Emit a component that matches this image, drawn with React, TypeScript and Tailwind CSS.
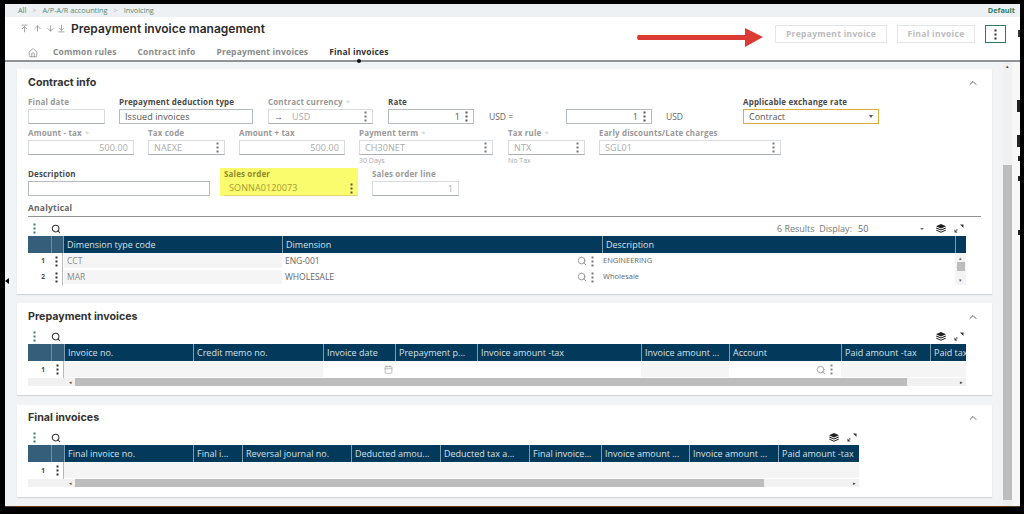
import { ArrowDown, ArrowDownToLine, ArrowUp, ArrowUpToLine, Calendar, ChevronUp, Home, Search } from 'lucide-react';
import type { ReactNode } from 'react';

const MoreDots = ({ className = 'text-[#555]' }: { className?: string }) => (
  <svg width="3" height="11" viewBox="0 0 3 11" className={`shrink-0 ${className}`} fill="currentColor">
    <rect x="0.5" y="0.5" width="2" height="2" />
    <rect x="0.5" y="4.5" width="2" height="2" />
    <rect x="0.5" y="8.5" width="2" height="2" />
  </svg>
);

const Expand = () => (
  <svg width="10" height="9" viewBox="0 0 10 9" fill="#333">
    <path d="M9.5 0.5 L9.5 4 L6 0.5 Z" />
    <path d="M0.5 8.5 L0.5 5.5 L3.5 8.5 Z" />
    <rect x="2" y="5.5" width="1.5" height="1" />
  </svg>
);

const Stack = () => (
  <svg width="10" height="9" viewBox="0 0 10 9" fill="#222">
    <path d="M5 0 L10 2.2 L5 4.4 L0 2.2 Z" />
    <path d="M0.6 3.6 L5 5.5 L9.4 3.6 L10 4.4 L5 6.6 L0 4.4 Z" />
    <path d="M0.6 5.8 L5 7.7 L9.4 5.8 L10 6.6 L5 8.8 L0 6.6 Z" />
  </svg>
);

interface FieldProps {
  label: string;
  value?: string;
  box: string;
  required?: boolean;
  dark?: boolean;
  right?: boolean;
  menu?: boolean;
  sub?: string;
  prefix?: boolean;
}

const Field = ({ label, value, box, required, dark, right, menu, sub, prefix }: FieldProps) => (
  <div className={`shrink-0 ${box}`}>
    <div className={`h-[10px] text-[8px] leading-[10px] font-bold tracking-[0.15px] whitespace-nowrap ${dark ? 'text-[#4a4a4a]' : 'text-[#999]'}`}>
      {label}
      {required && <span className="ml-[3px] font-normal text-[#ccc]">*</span>}
    </div>
    <div className={`mt-[2px] h-[15px] flex items-center px-[5px] text-[9px] tracking-[0.1px] bg-white border ${dark ? 'border-[#b4babd] text-[#555]' : 'border-[#d9dcde] border-b-[#aab0b3] text-[#aaa]'} ${right ? 'justify-end' : ''}`}>
      {prefix && <span className="mr-[9px] text-[#666]">→</span>}
      <span className={right ? '' : 'flex-1'}>{value}</span>
      {menu && <MoreDots className={`ml-[5px] ${dark ? 'text-[#555]' : 'text-[#777]'}`} />}
    </div>
    {sub && <div className="mt-[1px] h-[10px] text-[7px] leading-[10px] text-[#aaa]">{sub}</div>}
  </div>
);

const TableHead = ({ cols, grid }: { cols: string[]; grid: string }) => (
  <div className={`grid h-[17px] bg-[#03395a] ${grid}`}>
    <div className="bg-[#355e7a]" />
    <div className="bg-[#355e7a] border-l border-[#6f8ea3]" />
    {cols.map((label, i) => (
      <div key={i} className="border-l border-[#7e9cb0] pl-[3px] text-[9px] leading-[17px] text-[#d5e0e7] whitespace-nowrap overflow-hidden">
        {label}
      </div>
    ))}
  </div>
);

const RowHead = ({ n }: { n: number }) => (
  <>
    <div className="pr-[6px] text-right text-[6.5px] font-bold text-[#444] self-center">{n}</div>
    <div className="flex items-center justify-center border-r border-[#bbb]">
      <MoreDots className="text-[#333]" />
    </div>
  </>
);

const HScroll = ({ thumb }: { thumb: string }) => (
  <div className="flex items-center w-full h-[8px] bg-[#f1f1f1]">
    <div className="w-[47px] pr-[3px] text-right text-[5px] leading-none text-[#555]">◂</div>
    <div className={`h-[8px] bg-[#bdbdbd] ${thumb}`} />
    <div className="ml-auto pr-[3px] text-[5px] leading-none text-[#333]">▸</div>
  </div>
);

const GridToolbar = ({ children }: { children?: ReactNode }) => (
  <div className="flex items-center h-[15px] w-full">
    <MoreDots className="ml-[5px] text-[#2f7f68]" />
    <Search size={10} strokeWidth={2.5} className="ml-[15px] text-[#333]" />
    <div className="ml-auto flex items-center">
      {children}
      <Stack />
      <div className="ml-[8px] mr-[2px]">
        <Expand />
      </div>
    </div>
  </div>
);

const Panel = ({ title, className, children }: { title: string; className: string; children: ReactNode }) => (
  <section className={`w-[975px] bg-white shadow-[0_1px_1px_#d2d6d9] px-[11px] ${className}`}>
    <div className="flex items-center justify-between h-[14px] pr-[2px]">
      <h2 className="text-[10.7px] font-bold text-[#333]" style={{ fontFamily: 'Inter, sans-serif' }}>
        {title}
      </h2>
      <ChevronUp size={12} strokeWidth={2} className="text-[#666]" />
    </div>
    {children}
  </section>
);

const prepaymentCols = ['Invoice no.', 'Credit memo no.', 'Invoice date', 'Prepayment p...', 'Invoice amount -tax', 'Invoice amount ...', 'Account', 'Paid amount -tax', 'Paid tax'];
const finalCols = ['Final invoice no.', 'Final i...', 'Reversal journal no.', 'Deducted amou...', 'Deducted tax a...', 'Final invoice...', 'Invoice amount ...', 'Invoice amount ...', 'Paid amount -tax'];

export default function App() {
  return (
    <div className="w-[1024px] h-[514px] overflow-hidden bg-black pt-[4px] pl-[5px] pr-[4px] relative" style={{ fontFamily: '"Open Sans", sans-serif' }}>
      <div className="h-[502px] flex flex-col bg-white">
        {/* Breadcrumb */}
        <div className="h-[13px] flex items-center bg-[#eef1f4] pl-[13px] pr-[5px] text-[7.3px] text-[#4d8a78]">
          <span>All</span>
          <span className="mx-[6px] text-[#bbb]">&gt;</span>
          <span>A/P-A/R accounting</span>
          <span className="mx-[6px] text-[#bbb]">&gt;</span>
          <span>Invoicing</span>
          <span className="ml-auto font-bold text-[#2c7a5f]">Default</span>
        </div>

        {/* Header */}
        <div className="h-[45px] flex justify-between bg-white border-b-2 border-[#8f9396] relative">
          <div>
            <div className="flex items-center h-[22px] pt-[1px] pl-[15px]">
              <ArrowUpToLine size={9} className="text-[#888]" />
              <ArrowUp size={9} className="ml-[4px] text-[#888]" />
              <ArrowDown size={9} className="ml-[4px] text-[#888]" />
              <ArrowDownToLine size={9} className="ml-[2px] text-[#888]" />
              <h1 className="ml-[5px] text-[12px] font-semibold text-[#2b2b2b]" style={{ fontFamily: 'Inter, sans-serif' }}>
                Prepayment invoice management
              </h1>
            </div>
            <div className="flex items-center h-[19px] mt-[4px] pl-[23px] text-[8.5px] font-bold tracking-[0.15px] text-[#8a8a8a]">
              <Home size={10} strokeWidth={1.5} className="text-[#777]" />
              <span className="ml-[15px]">Common rules</span>
              <span className="ml-[21px]">Contract info</span>
              <span className="ml-[21px]">Prepayment invoices</span>
              <span className="ml-[21px] text-[#333]">Final invoices</span>
            </div>
          </div>
          <div className="flex items-start pt-[8px] pr-[14px] text-[8.5px] font-bold tracking-[0.3px] text-[#bcbcbc]">
            <button className="w-[112px] h-[18px] border border-[#e2e4e6]">Prepayment invoice</button>
            <button className="ml-[10px] w-[78px] h-[18px] border border-[#e2e4e6]">Final invoice</button>
            <button className="ml-[10px] w-[21px] h-[18px] border-[1.5px] border-[#2c7a5f] flex items-center justify-center">
              <MoreDots className="text-[#333]" />
            </button>
          </div>
          {/* Selected tab marker */}
          <div className="absolute left-[352px] bottom-[-3px] w-[4px] h-[4px] rounded-full bg-[#111]" />
        </div>

        {/* Scrolling content */}
        <div className="flex-1 flex min-h-0 bg-[#f1f3f5]">
          <div className="w-[998px] pl-[12px] pt-[7px]">
            {/* Contract info */}
            <Panel title="Contract info" className="h-[225px] pt-[7px]">
              <div className="flex mt-[7px]">
                <Field label="Final date" box="w-[77px]" />
                <Field label="Prepayment deduction type" value="Issued invoices" box="w-[134px] ml-[14px]" dark />
                <Field label="Contract currency" value="USD" box="w-[105px] ml-[15px]" required menu prefix />
                <Field label="Rate" value="1" box="w-[86px] ml-[15px]" dark right menu />
                <div className="w-[77px] ml-[15px] pt-[12px] text-[8.5px] leading-[15px] text-[#666]">USD =</div>
                <Field label="" value="1" box="w-[86px]" dark right menu />
                <div className="w-[63px] ml-[14px] pt-[12px] text-[8.5px] leading-[15px] text-[#666]">USD</div>
                <div className="w-[136px] ml-[14px]">
                  <div className="h-[10px] text-[8px] leading-[10px] font-bold tracking-[0.15px] text-[#4a4a4a] whitespace-nowrap">Applicable exchange rate</div>
                  <div className="mt-[2px] h-[15px] flex items-center justify-between px-[5px] text-[9px] text-[#555] border-[1.5px] border-[#dcae3c]">
                    Contract
                    <span className="w-0 h-0 border-x-[2.5px] border-x-transparent border-t-[3px] border-t-[#555]" />
                  </div>
                </div>
              </div>

              <div className="flex mt-[4px] h-[41px]">
                <Field label="Amount - tax" value="500.00" box="w-[106px]" required right />
                <Field label="Tax code" value="NAEXE" box="w-[77px] ml-[14px]" menu />
                <Field label="Amount + tax" value="500.00" box="w-[106px] ml-[14px]" right />
                <Field label="Payment term" value="CH30NET" box="w-[134px] ml-[14px]" required menu sub="30 Days" />
                <Field label="Tax rule" value="NTX" box="w-[77px] ml-[15px]" required menu sub="No Tax" />
                <Field label="Early discounts/Late charges" value="SGL01" box="w-[182px] ml-[14px]" menu />
              </div>

              <div className="flex h-[27px]">
                <Field label="Description" box="w-[182px]" dark />
                {/* Highlighted by the author of the screenshot */}
                <div className="w-[138px] h-[28px] -mt-[1px] ml-[10px] pt-[1px] pl-[4px] bg-[#fbfb6e]">
                  <div className="h-[10px] text-[8px] leading-[10px] font-bold tracking-[0.15px] text-[#8f8a2c]">Sales order</div>
                  <div className="mt-[2px] h-[15px] flex items-center justify-between px-[5px] text-[9px] tracking-[0.1px] text-[#a39c38] border-b border-[#d8d87a]">
                    SONNA0120073
                    <MoreDots className="text-[#555]" />
                  </div>
                </div>
                <Field label="Sales order line" value="1" box="w-[87px] ml-[14px]" right />
              </div>

              <div className="mt-[6px] h-[15px] text-[8.5px] font-bold tracking-[0.2px] leading-[12px] text-[#666] border-b border-[#8f9396] w-[953px]">Analytical</div>

              <div className="w-[938px] mt-[4px]">
                <GridToolbar>
                  <span className="text-[9px] text-[#777]">6 Results&nbsp; Display:</span>
                  <span className="ml-[6px] w-[62px] text-[9px] text-[#666]">50</span>
                  <span className="w-0 h-0 mr-[12px] border-x-[2px] border-x-transparent border-t-[2.5px] border-t-[#666]" />
                </GridToolbar>
                <TableHead cols={['Dimension type code', 'Dimension', 'Description', '']} grid="grid-cols-[23px_12px_219px_320px_353px_11px]" />
                <div className="flex">
                  <div className="w-[927px]">
                    {[
                      ['CCT', 'ENG-001', 'ENGINEERING'],
                      ['MAR', 'WHOLESALE', 'Wholesale'],
                    ].map((r, i) => (
                      <div key={r[0]} className="grid grid-cols-[23px_12px_219px_320px_353px] h-[16px] text-[8.5px] text-[#777]">
                        <RowHead n={i + 1} />
                        <div className="m-px mr-0 pl-[3px] bg-[#f5f5f5] leading-[14px] text-[#888]">{r[0]}</div>
                        <div className="flex items-center pl-[3px] pr-[8px] text-[#666]">
                          {r[1]}
                          <Search size={10} className="ml-auto text-[#888]" />
                          <MoreDots className="ml-[4px] text-[#777]" />
                        </div>
                        <div className="pl-[1px] text-[7.5px] leading-[15px] text-[#666]">{r[2]}</div>
                      </div>
                    ))}
                  </div>
                  <div className="w-[11px] ml-auto flex flex-col items-center bg-[#f4f4f4] text-[5px] leading-[6px] text-[#666]">
                    <span className="mt-[2px]">▴</span>
                    <div className="w-[8px] h-[9px] mt-[1px] bg-[#bdbdbd]" />
                    <span className="mt-auto mb-[2px]">▾</span>
                  </div>
                </div>
              </div>
            </Panel>

            {/* Prepayment invoices */}
            <Panel title="Prepayment invoices" className="h-[92px] mt-[9px] pt-[7px]">
              <div className="mt-[5px] w-[938px]">
                <GridToolbar />
                <TableHead cols={prepaymentCols} grid="grid-cols-[23px_13px_129px_130px_72px_82px_164px_88px_112px_89px_36px]" />
                <div className="grid grid-cols-[23px_13px_129px_130px_72px_82px_164px_88px_112px_89px_36px] h-[17px]">
                  <RowHead n={1} />
                  <div className="col-span-2 my-px bg-[#f5f5f5]" />
                  <div className="flex items-center justify-end pr-[2px]">
                    <Calendar size={9} className="text-[#aaa]" />
                  </div>
                  <div />
                  <div />
                  <div className="my-px bg-[#f5f5f5]" />
                  <div className="flex items-center justify-end pr-[8px]">
                    <Search size={10} className="text-[#999]" />
                    <MoreDots className="ml-[4px] text-[#888]" />
                  </div>
                  <div className="my-px bg-[#f5f5f5]" />
                  <div className="my-px bg-[#f5f5f5]" />
                </div>
                <HScroll thumb="w-[832px]" />
              </div>
            </Panel>

            {/* Final invoices */}
            <Panel title="Final invoices" className="h-[92px] mt-[10px] pt-[6px]">
              <div className="mt-[5px] w-[831px]">
                <GridToolbar />
                <TableHead cols={finalCols} grid="grid-cols-[23px_13px_129px_49px_109px_89px_89px_72px_88px_89px_81px]" />
                <div className="grid grid-cols-[23px_13px_795px] h-[17px]">
                  <RowHead n={1} />
                  <div className="my-px bg-[#f5f5f5]" />
                </div>
                <HScroll thumb="w-[689px]" />
              </div>
            </Panel>
          </div>

          {/* Page scrollbar */}
          <div className="w-[9px] flex flex-col bg-[#f0f0f0]">
            <div className="h-[103px] pt-[1px] text-center text-[5px] leading-[6px] text-[#444]">▴</div>
            <div className="h-[335px] bg-[#bdbdbd]" />
          </div>
          <div className="w-[8px] bg-[#f7f7f7]" />
        </div>
      </div>
      <div className="h-px bg-[#5a4020]" />

      {/* Red annotation arrow */}
      <svg className="absolute left-[636px] top-[27px]" width="128" height="21" viewBox="0 0 128 21">
        <path d="M2 8 L109 8 L109 1 L127 10 L109 20 L109 13 L2 13 Q0 10.5 2 8 Z" fill="#dc3b33" />
      </svg>

      {/* Bits of the neighbouring window caught at the edges of the capture */}
      <div className="absolute left-[5px] top-[278px] w-0 h-0 border-y-[3px] border-y-transparent border-r-[4px] border-r-black" />
      <div className="absolute left-[1018px] top-[30px] w-[2px] h-[7px] bg-[#333]" />
      <div className="absolute left-[1017px] top-[100px] w-[3px] h-[12px] bg-[#222]" />
      <div className="absolute left-[1017px] top-[135px] w-[3px] h-[12px] bg-[#222]" />
      <div className="absolute left-[1018px] top-[156px] w-[2px] h-[5px] bg-[#222]" />
      <div className="absolute left-[1018px] top-[176px] w-[2px] h-[5px] bg-[#222]" />
      <div className="absolute left-[1018px] top-[230px] w-[2px] h-[5px] bg-[#222]" />
    </div>
  );
}
